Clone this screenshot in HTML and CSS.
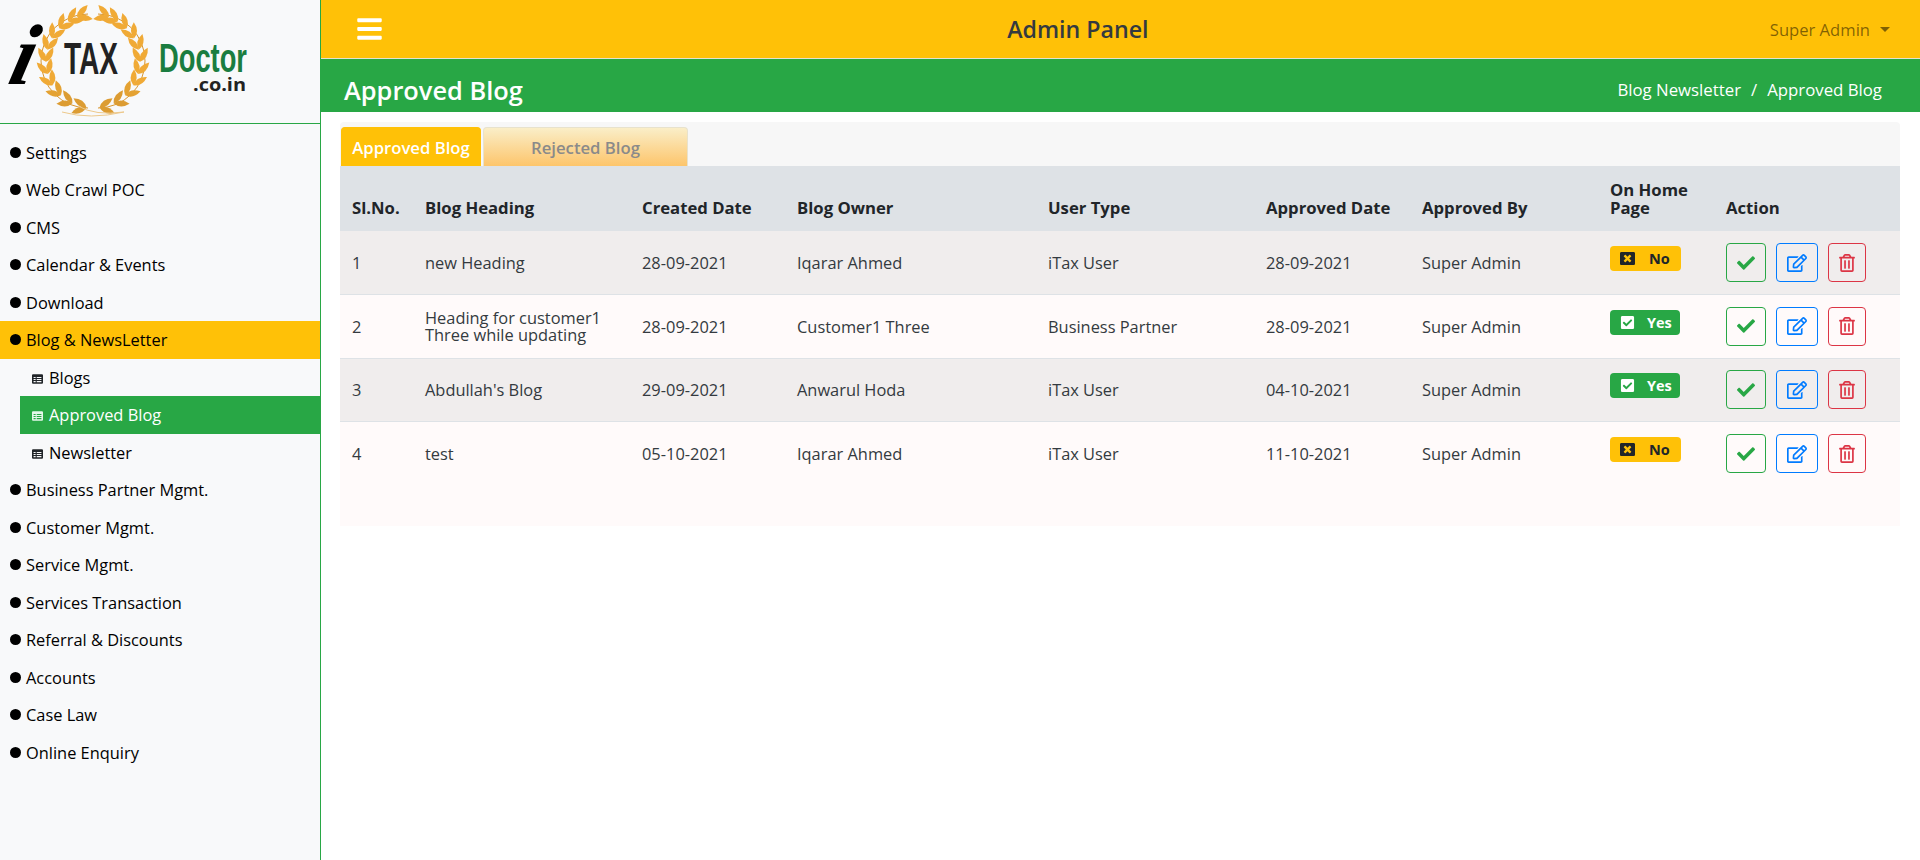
FILE: index.html
```html
<!DOCTYPE html>
<html lang="en">
<head>
    <meta charset="UTF-8">
    <meta name="viewport" content="width=device-width, initial-scale=1.0">
    <title>Approved Blog</title>
    <link rel="stylesheet" href="styles.css">
</head>
<body>
    <svg class="icon-defs" aria-hidden="true">
        <symbol id="i-bars" viewBox="0 0 448 512"><path d="M16 132h416c8.837 0 16-7.163 16-16V76c0-8.837-7.163-16-16-16H16C7.163 60 0 67.163 0 76v40c0 8.837 7.163 16 16 16zm0 160h416c8.837 0 16-7.163 16-16v-40c0-8.837-7.163-16-16-16H16c-8.837 0-16 7.163-16 16v40c0 8.837 7.163 16 16 16zm0 160h416c8.837 0 16-7.163 16-16v-40c0-8.837-7.163-16-16-16H16c-8.837 0-16 7.163-16 16v40c0 8.837 7.163 16 16 16z"/></symbol>
        <symbol id="i-list" viewBox="0 0 21 18"><path fill-rule="evenodd" d="M2 0h17a2 2 0 0 1 2 2v14a2 2 0 0 1-2 2H2a2 2 0 0 1-2-2V2a2 2 0 0 1 2-2zM3 5v2h4V5zm6 0v2h9V5zM3 9v2h4V9zm6 0v2h9V9zM3 13v2h4v-2zm6 0v2h9v-2z"/></symbol>
        <symbol id="i-check" viewBox="0 0 512 512"><path d="M173.898 439.404l-166.4-166.4c-9.997-9.997-9.997-26.206 0-36.204l36.203-36.204c9.997-9.998 26.207-9.998 36.204 0L192 312.69 432.095 72.596c9.997-9.997 26.207-9.997 36.204 0l36.203 36.204c9.997 9.997 9.997 26.206 0 36.204l-294.4 294.401c-9.998 9.997-26.207 9.997-36.204-.001z"/></symbol>
        <symbol id="i-edit" viewBox="0 0 576 512"><path d="M402.3 344.9l32-32c5-5 13.7-1.5 13.7 5.7V464c0 26.5-21.5 48-48 48H48c-26.5 0-48-21.5-48-48V112c0-26.5 21.5-48 48-48h273.5c7.1 0 10.7 8.6 5.7 13.7l-32 32c-1.5 1.5-3.5 2.3-5.7 2.3H48v352h352V350.5c0-2.1.8-4.1 2.3-5.6zm156.6-201.8L296.3 405.7l-90.4 10c-26.2 2.9-48.5-19.2-45.6-45.6l10-90.4L432.9 17.1c22.9-22.9 59.9-22.9 82.7 0l43.2 43.2c22.9 22.9 22.9 60 .1 82.8zM460.1 174L402 115.9 216.2 301.8l-7.3 65.3 65.3-7.3L460.1 174zm64.8-79.7l-43.2-43.2c-4.1-4.1-10.8-4.1-14.8 0L436 82l58.1 58.1 30.9-30.9c4-4.2 4-10.8-.1-14.9z"/></symbol>
        <symbol id="i-trash" viewBox="0 0 448 512"><path d="M268 416h24a12 12 0 0 0 12-12V188a12 12 0 0 0-12-12h-24a12 12 0 0 0-12 12v216a12 12 0 0 0 12 12zM432 80h-82.41l-34-56.7A48 48 0 0 0 274.41 0H173.59a48 48 0 0 0-41.16 23.3L98.41 80H16A16 16 0 0 0 0 96v16a16 16 0 0 0 16 16h16v336a48 48 0 0 0 48 48h288a48 48 0 0 0 48-48V128h16a16 16 0 0 0 16-16V96a16 16 0 0 0-16-16zM171.84 50.91A6 6 0 0 1 177 48h94a6 6 0 0 1 5.15 2.91L293.61 80H154.39zM368 464H80V128h288zm-212-48h24a12 12 0 0 0 12-12V188a12 12 0 0 0-12-12h-24a12 12 0 0 0-12 12v216a12 12 0 0 0 12 12z"/></symbol>
        <symbol id="i-close" viewBox="0 0 512 512"><path d="M464 32H48C21.5 32 0 53.5 0 80v352c0 26.5 21.5 48 48 48h416c26.5 0 48-21.5 48-48V80c0-26.5-21.5-48-48-48zm-83.6 290.5c4.8 4.8 4.8 12.6 0 17.4l-40.5 40.5c-4.8 4.8-12.6 4.8-17.4 0L256 313.3l-66.5 67.1c-4.8 4.8-12.6 4.8-17.4 0l-40.5-40.5c-4.8-4.8-4.8-12.6 0-17.4l67.1-66.5-67.1-66.5c-4.8-4.8-4.8-12.6 0-17.4l40.5-40.5c4.8-4.8 12.6-4.8 17.4 0l66.5 67.1 66.5-67.1c4.8-4.8 12.6-4.8 17.4 0l40.5 40.5c4.8 4.8 4.8 12.6 0 17.4L313.3 256l67.1 66.5z"/></symbol>
        <symbol id="i-tick" viewBox="0 0 448 512"><path d="M400 480H48c-26.51 0-48-21.49-48-48V80c0-26.51 21.49-48 48-48h352c26.51 0 48 21.49 48 48v352c0 26.51-21.49 48-48 48zm-204.686-98.059l184-184c6.248-6.248 6.248-16.379 0-22.627l-22.627-22.627c-6.248-6.248-16.379-6.249-22.628 0L184 302.745l-70.059-70.059c-6.248-6.248-16.379-6.248-22.628 0l-22.627 22.627c-6.248 6.248-6.248 16.379 0 22.627l104 104c6.249 6.25 16.379 6.25 22.628.001z"/></symbol>
    </svg>

    <aside class="sidebar">
        <div class="logo">
            <svg class="logo-img" viewBox="0 0 320 123" width="320" height="123">
                <defs>
                    <path id="leaf" d="M0 0Q6-7 0-16Q-6-7 0 0z"/>
                    <g id="leaf-pair">
                        <use href="#leaf" transform="translate(93 108) rotate(-118)"/>
                        <use href="#leaf" transform="translate(93 108) rotate(-62)"/>
                    </g>
                    <g id="branch">
                        <path d="M88 108A47 47 0 0 1 88 14" fill="none" stroke="#d9962e" stroke-width="1"/>
                        <use href="#leaf-pair" fill="#dc9c32" transform="rotate(8 93 61)"/>
                        <use href="#leaf-pair" fill="#dc9c32" transform="rotate(26 93 61)"/>
                        <use href="#leaf-pair" fill="#e4a232" transform="rotate(43 93 61)"/>
                        <use href="#leaf-pair" transform="rotate(59 93 61)"/>
                        <use href="#leaf-pair" transform="rotate(74 93 61)"/>
                        <use href="#leaf-pair" transform="rotate(89 93 61)"/>
                        <use href="#leaf-pair" transform="rotate(104 93 61)"/>
                        <use href="#leaf-pair" transform="rotate(119 93 61)"/>
                        <use href="#leaf-pair" transform="rotate(134 93 61)"/>
                        <use href="#leaf-pair" transform="rotate(148 93 61)"/>
                        <use href="#leaf-pair" transform="rotate(160 93 61)"/>
                    </g>
                </defs>
                <g fill="#f0aa36">
                    <use href="#branch"/>
                    <use href="#branch" transform="translate(186 0) scale(-1 1)"/>
                </g>
                <path d="M62 112Q90 120 124 112Q95 116 78 106" fill="none" stroke="#edc98c" stroke-width="1"/>
                <text class="logo-i" transform="translate(6 84) skewX(-14)">i</text>
                <text class="logo-tax" x="64" y="74" textLength="54" lengthAdjust="spacingAndGlyphs">TAX</text>
                <text class="logo-doctor" x="159" y="72" textLength="88" lengthAdjust="spacingAndGlyphs">Doctor</text>
                <text class="logo-domain" x="193" y="91" textLength="53" lengthAdjust="spacingAndGlyphs">.co.in</text>
            </svg>
        </div>
        <ul class="menu">
            <li class="menu-item">Settings</li>
            <li class="menu-item">Web Crawl POC</li>
            <li class="menu-item">CMS</li>
            <li class="menu-item">Calendar &amp; Events</li>
            <li class="menu-item">Download</li>
            <li class="menu-item open">Blog &amp; NewsLetter</li>
            <li class="sub-item"><svg class="sub-icon"><use href="#i-list"/></svg>Blogs</li>
            <li class="sub-item active"><svg class="sub-icon"><use href="#i-list"/></svg>Approved Blog</li>
            <li class="sub-item"><svg class="sub-icon"><use href="#i-list"/></svg>Newsletter</li>
            <li class="menu-item">Business Partner Mgmt.</li>
            <li class="menu-item">Customer Mgmt.</li>
            <li class="menu-item">Service Mgmt.</li>
            <li class="menu-item">Services Transaction</li>
            <li class="menu-item">Referral &amp; Discounts</li>
            <li class="menu-item">Accounts</li>
            <li class="menu-item">Case Law</li>
            <li class="menu-item">Online Enquiry</li>
        </ul>
    </aside>

    <main class="main">
        <header class="topbar">
            <svg class="bars"><use href="#i-bars"/></svg>
            <div class="panel-title">Admin Panel</div>
            <div class="user">Super Admin<span class="caret"></span></div>
        </header>
        <div class="page-head">
            <h1>Approved Blog</h1>
            <div class="crumbs"><span>Blog Newsletter</span><span class="sep">/</span><span>Approved Blog</span></div>
        </div>

        <section class="card">
            <div class="tabs">
                <div class="tab current">Approved Blog</div>
                <div class="tab">Rejected Blog</div>
            </div>
            <table class="blog-table">
                <colgroup>
                    <col class="c-sl"><col class="c-heading"><col class="c-created"><col class="c-owner"><col class="c-type"><col class="c-approved"><col class="c-by"><col class="c-home"><col class="c-action">
                </colgroup>
                <thead>
                    <tr>
                        <th>Sl.No.</th>
                        <th>Blog Heading</th>
                        <th>Created Date</th>
                        <th>Blog Owner</th>
                        <th>User Type</th>
                        <th>Approved Date</th>
                        <th>Approved By</th>
                        <th>On Home Page</th>
                        <th>Action</th>
                    </tr>
                </thead>
                <tbody>
                    <tr>
                        <td>1</td>
                        <td>new Heading</td>
                        <td>28-09-2021</td>
                        <td>Iqarar Ahmed</td>
                        <td>iTax User</td>
                        <td>28-09-2021</td>
                        <td>Super Admin</td>
                        <td class="home-cell"><span class="badge no"><svg class="badge-icon"><use href="#i-close"/></svg>No</span></td>
                        <td><div class="actions">
                            <button class="btn ok"><svg><use href="#i-check"/></svg></button>
                            <button class="btn edit"><svg><use href="#i-edit"/></svg></button>
                            <button class="btn del"><svg><use href="#i-trash"/></svg></button>
                        </div></td>
                    </tr>
                    <tr>
                        <td>2</td>
                        <td>Heading for customer1 Three while updating</td>
                        <td>28-09-2021</td>
                        <td>Customer1 Three</td>
                        <td>Business Partner</td>
                        <td>28-09-2021</td>
                        <td>Super Admin</td>
                        <td class="home-cell"><span class="badge yes"><svg class="badge-icon"><use href="#i-tick"/></svg>Yes</span></td>
                        <td><div class="actions">
                            <button class="btn ok"><svg><use href="#i-check"/></svg></button>
                            <button class="btn edit"><svg><use href="#i-edit"/></svg></button>
                            <button class="btn del"><svg><use href="#i-trash"/></svg></button>
                        </div></td>
                    </tr>
                    <tr>
                        <td>3</td>
                        <td>Abdullah's Blog</td>
                        <td>29-09-2021</td>
                        <td>Anwarul Hoda</td>
                        <td>iTax User</td>
                        <td>04-10-2021</td>
                        <td>Super Admin</td>
                        <td class="home-cell"><span class="badge yes"><svg class="badge-icon"><use href="#i-tick"/></svg>Yes</span></td>
                        <td><div class="actions">
                            <button class="btn ok"><svg><use href="#i-check"/></svg></button>
                            <button class="btn edit"><svg><use href="#i-edit"/></svg></button>
                            <button class="btn del"><svg><use href="#i-trash"/></svg></button>
                        </div></td>
                    </tr>
                    <tr>
                        <td>4</td>
                        <td>test</td>
                        <td>05-10-2021</td>
                        <td>Iqarar Ahmed</td>
                        <td>iTax User</td>
                        <td>11-10-2021</td>
                        <td>Super Admin</td>
                        <td class="home-cell"><span class="badge no"><svg class="badge-icon"><use href="#i-close"/></svg>No</span></td>
                        <td><div class="actions">
                            <button class="btn ok"><svg><use href="#i-check"/></svg></button>
                            <button class="btn edit"><svg><use href="#i-edit"/></svg></button>
                            <button class="btn del"><svg><use href="#i-trash"/></svg></button>
                        </div></td>
                    </tr>
                </tbody>
            </table>
            <div class="table-foot"></div>
        </section>
    </main>
</body>
</html>
```

FILE: styles.css
```css
* {
    box-sizing: border-box;
}

body {
    margin: 0;
    height: 100vh;
    display: flex;
    overflow: hidden;
    background: white;
    color: #212529;
    font-family: 'Open Sans', 'Noto Sans', sans-serif;
    font-size: 16.4px;
}

.icon-defs {
    display: none;
}

/* Sidebar */
.sidebar {
    width: 321px;
    flex-shrink: 0;
    background: #f8f9fa;
    border-right: 1px solid #28a745;
}

.logo {
    height: 124px;
    border-bottom: 1px solid #28a745;
}

.logo-img {
    display: block;
}

.logo-i {
    font: italic bold 86px 'Liberation Serif', serif;
    fill: black;
}

.logo-tax {
    font: bold 44px 'Liberation Sans', sans-serif;
    fill: #222;
}

.logo-doctor {
    font: bold 40px 'Liberation Sans', sans-serif;
    fill: #1a7d40;
}

.logo-domain {
    font: bold 18px 'Open Sans', sans-serif;
    fill: #222;
}

.menu {
    list-style: none;
    margin: 0;
    padding: 9.5px 0 0;
}

.menu-item,
.sub-item {
    height: 37.5px;
    display: flex;
    align-items: center;
    color: black;
    white-space: nowrap;
}

.menu-item {
    padding-left: 26px;
    position: relative;
}

.menu-item::before {
    content: "";
    position: absolute;
    left: 10px;
    top: 13px;
    width: 11px;
    height: 11px;
    border-radius: 50%;
    background: black;
}

.menu-item.open {
    background: #ffc107;
}

.sub-item {
    margin-left: 20px;
    padding-left: 12px;
}

.sub-item.active {
    background: #28a745;
    color: white;
}

.sub-icon {
    width: 11px;
    height: 10px;
    margin: 3px 6px 0 0;
    fill: #212529;
}

.sub-item.active .sub-icon {
    fill: #e4f7ea;
}

/* Top bars */
.main {
    flex: 1;
    min-width: 0;
}

.topbar {
    height: 59px;
    background: #ffc107;
    border-bottom: 1px solid #e2e2d0;
    display: flex;
    align-items: center;
    justify-content: space-between;
    padding: 0 30px 0 36px;
}

.bars {
    width: 25px;
    height: 28px;
    fill: white;
}

.panel-title {
    font-size: 23.2px;
    font-weight: 600;
    color: #343a40;
    margin-left: 4px;
}

.user {
    color: rgba(0, 0, 0, 0.5);
    font-size: 16.6px;
    display: flex;
    align-items: center;
}

.caret {
    width: 0;
    height: 0;
    margin-left: 10px;
    border-top: 5px solid rgba(0, 0, 0, 0.5);
    border-left: 5px solid transparent;
    border-right: 5px solid transparent;
}

.page-head {
    height: 53px;
    background: #28a745;
    color: white;
    display: flex;
    align-items: center;
    justify-content: space-between;
    padding: 8px 38px 0 23px;
}

.page-head h1 {
    margin: 0;
    font-size: 25.4px;
    font-weight: 600;
}

.crumbs {
    display: flex;
    gap: 10px;
    font-size: 16.8px;
}

/* Card with the table */
.card {
    margin: 10px 20px 0 19px;
    background: #f7f7f7;
    border-radius: 4px;
    padding-top: 5px;
}

.tabs {
    display: flex;
    gap: 2px;
    height: 40px;
    padding-left: 1px;
    border-bottom: 1px solid #dee2e6;
}

.tab {
    width: 205px;
    height: 39px;
    display: flex;
    align-items: center;
    justify-content: center;
    border: 1px solid #e8e2cc;
    border-bottom: none;
    border-radius: 4px 4px 0 0;
    background: linear-gradient(#faeec8, #fdc56b);
    color: #8a8a8a;
    font-size: 16.7px;
    font-weight: 600;
}

.tab.current {
    width: 140px;
    background: #ffc107;
    border-color: #ffc107;
    color: white;
}

.blog-table {
    width: 100%;
    table-layout: fixed;
    border-collapse: collapse;
}

.c-sl { width: 73px; }
.c-heading { width: 217px; }
.c-created { width: 155px; }
.c-owner { width: 251px; }
.c-type { width: 218px; }
.c-approved { width: 156px; }
.c-by { width: 188px; }
.c-home { width: 116px; }
.c-action { width: 186px; }

.blog-table th {
    height: 64px;
    padding: 8px 12px 14px;
    background: #dee2e6;
    font-size: 16.7px;
    font-weight: 700;
    line-height: 18px;
    text-align: left;
    vertical-align: bottom;
}

.blog-table td {
    height: 63.6px;
    padding: 0 12px;
    border-bottom: 1px solid #dee2e6;
    line-height: 17px;
    color: #343a40;
    vertical-align: middle;
}

.blog-table tbody tr:nth-child(odd) {
    background: #f0eded;
}

.blog-table tbody tr:nth-child(even) {
    background: #fffafa;
}

.blog-table tbody tr:last-child td {
    border-bottom: none;
}

.home-cell {
    padding-bottom: 8px !important;
}

.badge {
    width: 71px;
    height: 25px;
    display: flex;
    align-items: center;
    border-radius: 4px;
    padding-left: 10px;
    font-size: 14.5px;
    font-weight: 700;
}

.badge-icon {
    width: 15px;
    height: 15px;
    margin-right: 14px;
}

.badge.no {
    background: #ffc107;
    color: #212529;
}

.badge.no .badge-icon {
    fill: #212529;
}

.badge.yes {
    width: 70px;
    background: #28a745;
    color: white;
}

.badge.yes .badge-icon {
    margin-right: 12px;
    fill: white;
}

.actions {
    display: flex;
    gap: 10px;
}

.btn {
    width: 40px;
    height: 39px;
    padding: 0;
    display: flex;
    align-items: center;
    justify-content: center;
    background: transparent;
    border: 1px solid;
    border-radius: 4px;
}

.btn svg {
    width: 18px;
    height: 18px;
    fill: currentColor;
}

.btn.ok {
    color: #28a745;
}

.btn.edit {
    width: 42px;
    color: #007bff;
}

.btn.edit svg {
    width: 20px;
}

.btn.del {
    width: 38px;
    color: #dc3545;
}

.table-foot {
    height: 41px;
    background: #fffafa;
}
```
